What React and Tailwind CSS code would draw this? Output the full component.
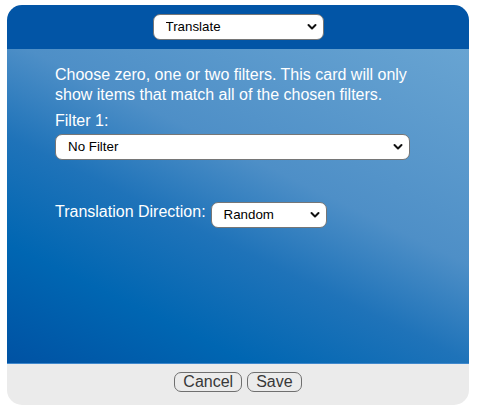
import React from "react";

function Chevron() {
  return (
    <svg
      className="pointer-events-none absolute right-[7px] top-1/2 -translate-y-1/2"
      width="10"
      height="7"
      viewBox="0 0 10 7"
      fill="none"
    >
      <polyline points="1.5,1.5 5,5 8.5,1.5" stroke="#111" strokeWidth="2" strokeLinecap="round" strokeLinejoin="round" />
    </svg>
  );
}

function Select({ width, value, options }) {
  return (
    <div className="relative shrink-0" style={{ width }}>
      <select
        defaultValue={value}
        className="block h-[26px] w-full appearance-none rounded-[7px] border border-[#767676] bg-white pl-[12px] pr-[24px] text-[13.333px] leading-[16px] text-black outline-none [font-family:'Liberation_Sans',Arial,sans-serif]"
      >
        {options.map((o) => (
          <option key={o}>{o}</option>
        ))}
      </select>
      <Chevron />
    </div>
  );
}

export default function App() {
  return (
    <div className="min-h-[411px] w-[477px] bg-white pt-[5px] pl-[7px] [font-family:'Liberation_Sans',Arial,sans-serif]">
      <div className="flex h-[400px] w-[462px] flex-col overflow-hidden rounded-[15px]">
        <div className="flex h-[44px] shrink-0 items-center justify-center bg-[#0255a6]">
          <Select width="171px" value="Translate" options={["Translate", "Review", "Study"]} />
        </div>
        <div className="flex-1 bg-[linear-gradient(26deg,#0052a3_0%,#0066b2_22%,#1f73b9_42%,#4e8fc7_60%,#68a4d2_100%)] pl-[48px] pt-[16px]">
          <div className="w-[356px] text-[16px] leading-[19.5px] text-white">
            <p>Choose zero, one or two filters. This card will only show items that match all of the chosen filters.</p>
            <div className="mt-[7px]">Filter 1:</div>
            <div className="mt-[3px]">
              <Select width="355px" value="No Filter" options={["No Filter"]} />
            </div>
            <div className="mt-[42px] flex items-start gap-[5px]">
              <span className="leading-[19.5px]">Translation Direction:</span>
              <Select width="116px" value="Random" options={["Random", "Forward", "Reverse"]} />
            </div>
          </div>
        </div>
        <div className="flex h-[42px] shrink-0 items-start justify-center gap-[5px] border-t border-[#3f88cc] bg-[#ebebeb] pt-[8px]">
          <button className="h-[20px] rounded-[7px] border border-[#6f6f6f] px-[8px] text-[16px] leading-[18px] text-[#383838]">
            Cancel
          </button>
          <button className="h-[20px] rounded-[7px] border border-[#6f6f6f] px-[8px] text-[16px] leading-[18px] text-[#383838]">
            Save
          </button>
        </div>
      </div>
    </div>
  );
}
